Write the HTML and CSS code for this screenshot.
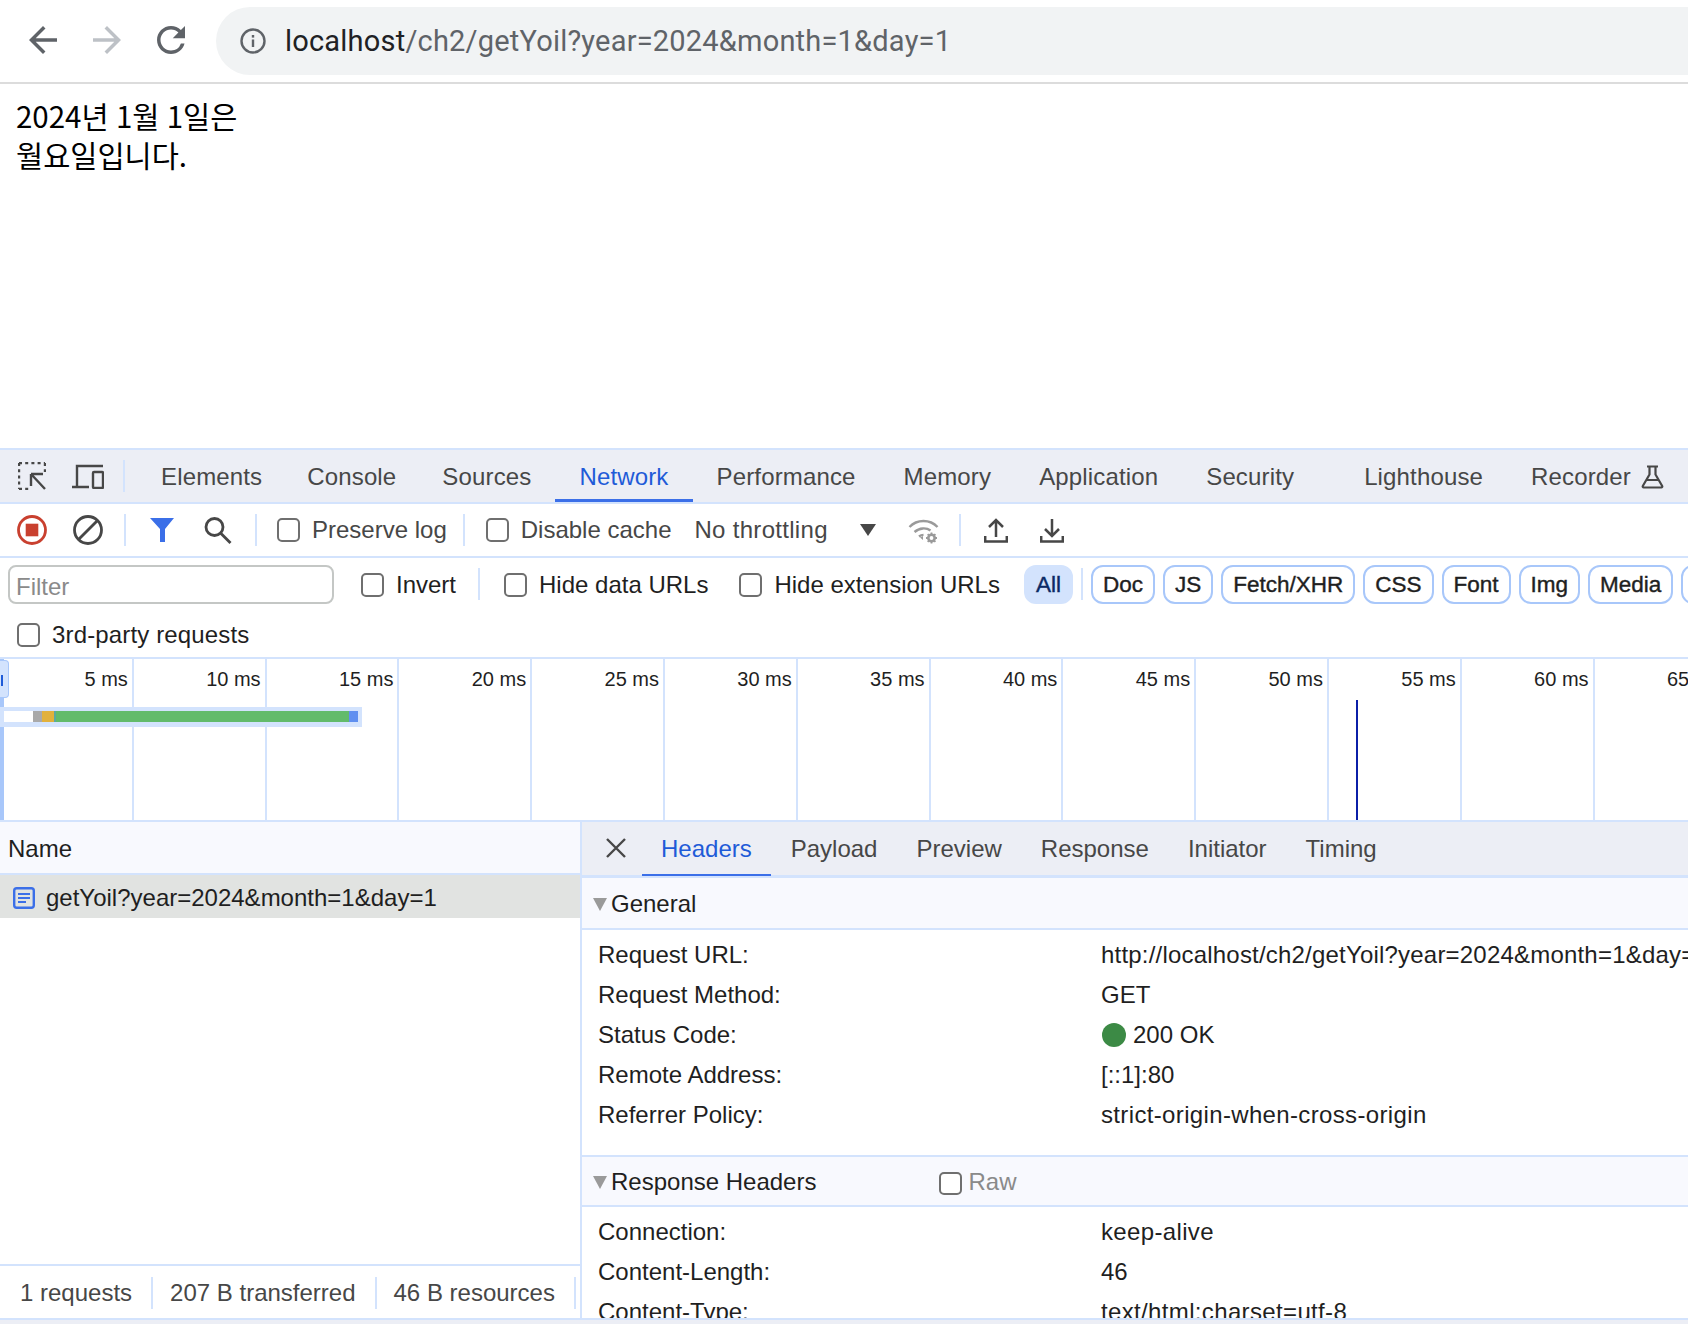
FILE: index.html
```html
<!DOCTYPE html>
<html lang="ko">
<head>
    <meta charset="UTF-8">
    <title>localhost/ch2/getYoil</title>
    <link rel="stylesheet" href="styles.css">
</head>
<body>

    <!-- Browser toolbar -->
    <div class="browser-bar">
        <svg class="nav-icon" viewBox="0 0 24 24"><path fill="#5f6368" d="M20 11H7.83l5.59-5.59L12 4l-8 8 8 8 1.41-1.41L7.83 13H20v-2z"/></svg>
        <svg class="nav-icon" viewBox="0 0 24 24"><path fill="#bdc1c6" d="M4 11h12.17l-5.59-5.59L12 4l8 8-8 8-1.41-1.41L16.17 13H4v-2z"/></svg>
        <svg class="nav-icon" viewBox="0 0 24 24"><path fill="#5f6368" d="M17.65 6.35A7.958 7.958 0 0 0 12 4c-4.42 0-7.99 3.58-7.99 8s3.57 8 7.99 8c3.73 0 6.84-2.55 7.73-6h-2.08A5.99 5.99 0 0 1 12 18c-3.31 0-6-2.69-6-6s2.69-6 6-6c1.66 0 3.14.69 4.22 1.78L13 11h7V4l-2.35 2.35z"/></svg>
        <div class="address">
            <svg class="info-icon" viewBox="0 0 28 28"><circle cx="14" cy="14" r="11.5" fill="none" stroke="#5f6368" stroke-width="2.4"/><rect x="12.8" y="12.5" width="2.4" height="7.5" fill="#5f6368"/><rect x="12.8" y="8" width="2.4" height="2.6" fill="#5f6368"/></svg>
            <span class="host">localhost</span><span class="path">/ch2/getYoil?year=2024&amp;month=1&amp;day=1</span>
        </div>
    </div>

    <!-- Page content -->
    <div class="page">2024년 1월 1일은<br>월요일입니다.</div>

    <!-- DevTools -->
    <div class="devtools">
        <div class="main-tabs">
            <svg class="select-icon" viewBox="0 0 28 28" fill="none" stroke="#474747" stroke-width="2.4">
                <path d="M1 1h26M1 1v26M1 27h10M27 1v9" stroke-dasharray="3 3.2"/>
                <path d="M13 12h12M13 12v12M13 12l14 15"/>
            </svg>
            <svg class="device-icon" viewBox="0 0 32 25" fill="none" stroke="#474747" stroke-width="2.4">
                <path d="M5 22V2h26M0 23h17"/>
                <rect x="21" y="8" width="10" height="16" rx="1"/>
            </svg>
            <span class="divider tabs-divider"></span>
            <span class="tab">Elements</span>
            <span class="tab console-tab">Console</span>
            <span class="tab">Sources</span>
            <span class="tab active">Network</span>
            <span class="tab">Performance</span>
            <span class="tab">Memory</span>
            <span class="tab">Application</span>
            <span class="tab security-tab">Security</span>
            <span class="tab">Lighthouse</span>
            <span class="tab recorder-tab">Recorder
                <svg class="flask-icon" viewBox="0 0 23 24" fill="none" stroke="#474747" stroke-width="2.2"><path d="M6 1.5h11M8.5 1.5v8L1.8 21a1 1 0 0 0 .9 1.5h17.6a1 1 0 0 0 .9-1.5L14.500 9.500v-8M5.500 15h12"/></svg>
            </span>
        </div>

        <div class="net-toolbar">
            <span class="icon-btn"><svg viewBox="0 0 30 30" width="30" height="30"><circle cx="15" cy="15" r="13.500" fill="none" stroke="#c9402f" stroke-width="2.800"/><rect x="8.700" y="8.700" width="12.600" height="12.600" fill="#c9402f"/></svg></span>
            <span class="icon-btn"><svg viewBox="0 0 30 30" width="30" height="30" fill="none" stroke="#474747" stroke-width="2.800"><circle cx="15" cy="15" r="13.500"/><path d="M5.500 24.500l19-19"/></svg></span>
            <span class="divider record-divider"></span>
            <span class="icon-btn"><svg viewBox="0 0 24 24" width="24" height="24"><path fill="#3b6fe8" d="M0 0h24l-9 11v13h-5V11z"/></svg></span>
            <span class="icon-btn"><svg viewBox="0 0 28 27" width="28" height="27" fill="none" stroke="#474747" stroke-width="2.800"><circle cx="10.500" cy="10" r="8.500"/><path d="M16.500 16l10 10"/></svg></span>
            <span class="divider"></span>
            <label class="check preserve"><input type="checkbox">Preserve log</label>
            <span class="divider"></span>
            <label class="check cache"><input type="checkbox">Disable cache</label>
            <span class="throttle">No throttling</span>
            <svg class="caret" viewBox="0 0 16 12"><path fill="#474747" d="M0 0h16L8 12z"/></svg>
            <svg class="wifi-icon" viewBox="0 0 31 27" fill="none" stroke="#9a9a9a" stroke-width="2.400">
                <path d="M1.500 10C9 2 22 2 29.500 10M6.500 15c5-4.500 12-4.500 16 -1.500M11 19.500c1.500-1.200 3-1.600 4.500-1.600"/>
                <path fill="#9a9a9a" stroke="none" d="M15 23l-3-2.500 3-1.500z"/>
                <circle cx="23.500" cy="21" r="3.200" stroke-width="2.600"/>
                <path stroke-width="1.800" d="M23.500 15.500v2M23.500 24.500v2M18 21h2M27 21h2M19.700 17.200l1.400 1.400M26 23.500l1.400 1.400M19.700 24.800l1.400-1.400M26 18.500l1.400-1.400"/>
            </svg>
            <span class="divider"></span>
            <svg class="transfer-icon upload" viewBox="0 0 24 25" fill="none" stroke="#474747" stroke-width="2.500"><path d="M12 19V2M5 9l7-7 7 7M1.200 18v5.500h21.600V18"/></svg>
            <svg class="transfer-icon download" viewBox="0 0 24 25" fill="none" stroke="#474747" stroke-width="2.500"><path d="M12 1v17M5 11l7 7 7-7M1.200 18v5.500h21.600V18"/></svg>
        </div>

        <div class="filter-bar">
            <div class="filter-row">
                <div class="filter-input">Filter</div>
                <label class="check invert"><input type="checkbox">Invert</label>
                <span class="divider"></span>
                <label class="check hide-data"><input type="checkbox">Hide data URLs</label>
                <label class="check hide-ext"><input type="checkbox">Hide extension URLs</label>
                <span class="pill selected">All</span>
                <span class="divider pill-divider"></span>
                <span class="pill">Doc</span>
                <span class="pill">JS</span>
                <span class="pill">Fetch/XHR</span>
                <span class="pill">CSS</span>
                <span class="pill">Font</span>
                <span class="pill">Img</span>
                <span class="pill">Media</span>
                <span class="pill">Manifest</span>
            </div>
            <label class="check third-party"><input type="checkbox">3rd-party requests</label>
        </div>

        <!-- Timeline overview -->
        <div class="overview">
            <div class="grid-cell"><span>5 ms</span></div>
            <div class="grid-cell"><span>10 ms</span></div>
            <div class="grid-cell"><span>15 ms</span></div>
            <div class="grid-cell"><span>20 ms</span></div>
            <div class="grid-cell"><span>25 ms</span></div>
            <div class="grid-cell"><span>30 ms</span></div>
            <div class="grid-cell"><span>35 ms</span></div>
            <div class="grid-cell"><span>40 ms</span></div>
            <div class="grid-cell"><span>45 ms</span></div>
            <div class="grid-cell"><span>50 ms</span></div>
            <div class="grid-cell"><span>55 ms</span></div>
            <div class="grid-cell"><span>60 ms</span></div>
            <div class="grid-cell"><span>65 ms</span></div>
            <div class="handle-line"></div>
            <div class="handle"></div>
            <div class="load-line"></div>
            <div class="request-strip">
                <span class="seg seg-white"></span>
                <span class="seg seg-grey"></span>
                <span class="seg seg-amber"></span>
                <span class="seg seg-green"></span>
                <span class="seg seg-blue"></span>
            </div>
        </div>

        <div class="split">
            <!-- Request list -->
            <div class="list-pane">
                <div class="list-header">Name</div>
                <div class="list-row">
                    <svg class="doc-icon" viewBox="0 0 22 22" fill="none" stroke="#3b6fe8"><rect x="1.200" y="1.200" width="19.600" height="19.600" rx="2.500" stroke-width="2.400"/><path stroke-width="2.200" d="M5 7h12M5 11h12M5 15h8"/></svg>
                    getYoil?year=2024&amp;month=1&amp;day=1
                </div>
                <div class="list-empty"></div>
                <div class="status-bar">
                    <span>1 requests</span>
                    <span>207 B transferred</span>
                    <span>46 B resources</span>
                </div>
            </div>

            <!-- Request details -->
            <div class="detail-pane">
                <div class="detail-tabs">
                    <svg class="close-icon" viewBox="0 0 20 20" fill="none" stroke="#474747" stroke-width="2.400"><path d="M1 1l18 18M19 1L1 19"/></svg>
                    <span class="detail-tab active">Headers</span>
                    <span class="detail-tab">Payload</span>
                    <span class="detail-tab">Preview</span>
                    <span class="detail-tab">Response</span>
                    <span class="detail-tab">Initiator</span>
                    <span class="detail-tab">Timing</span>
                </div>

                <div class="section-title"><span class="triangle"></span>General</div>
                <div class="rows">
                    <div class="row"><span class="key">Request URL:</span><span class="url">http://localhost/ch2/getYoil?year=2024&amp;month=1&amp;day=1</span></div>
                    <div class="row"><span class="key">Request Method:</span><span>GET</span></div>
                    <div class="row"><span class="key">Status Code:</span><span class="status"><span class="dot"></span>200 OK</span></div>
                    <div class="row"><span class="key">Remote Address:</span><span>[::1]:80</span></div>
                    <div class="row"><span class="key">Referrer Policy:</span><span class="value">strict-origin-when-cross-origin</span></div>
                </div>

                <div class="section-title response-title">
                    <span class="triangle"></span>Response Headers
                    <label class="raw"><input type="checkbox">Raw</label>
                </div>
                <div class="rows">
                    <div class="row"><span class="key">Connection:</span><span class="value">keep-alive</span></div>
                    <div class="row"><span class="key">Content-Length:</span><span>46</span></div>
                    <div class="row"><span class="key">Content-Type:</span><span class="value">text/html;charset=utf-8</span></div>
                </div>
            </div>
        </div>
        <div class="bottom-strip"></div>
    </div>

</body>
</html>
```

FILE: styles.css
```css
* {
    box-sizing: border-box;
}
body {
    margin: 0;
    width: 1688px;
    height: 1324px;
    overflow: hidden;
    background: white;
    font-family: "Liberation Sans", Arial, sans-serif;
    font-size: 24px;
    color: #1f1f1f;
}

/* browser chrome */
.browser-bar {
    height: 84px;
    display: flex;
    align-items: flex-start;
    border-bottom: 2px solid #dcdcdc;
    padding: 7px 0 0 22px;
    overflow: hidden;
}
.nav-icon {
    width: 42px;
    height: 42px;
    margin: 12px 22px 0 0;
    flex-shrink: 0;
}
.address {
    width: 1600px;
    height: 68px;
    margin-left: 2px;
    flex-shrink: 0;
    display: flex;
    align-items: center;
    background: #f1f3f4;
    border-radius: 34px;
    padding-left: 23px;
    font-family: Roboto, sans-serif;
    font-size: 29px;
    letter-spacing: 0.2px;
}
.info-icon {
    width: 28px;
    height: 28px;
    margin-right: 18px;
}
.host {
    color: #202124;
}
.path {
    color: #5f6368;
}

.page {
    height: 364px;
    padding: 12px 0 0 16px;
    font-family: "Noto Sans CJK KR", sans-serif;
    font-size: 29.5px;
    line-height: 39px;
    word-spacing: -1px;
    color: black;
}

/* devtools */
.devtools {
    height: 876px;
    display: flex;
    flex-direction: column;
    overflow: hidden;
}
.divider {
    width: 2px;
    height: 32px;
    margin: 0 9px;
    background: #d3e3fd;
    flex-shrink: 0;
}
.main-tabs {
    height: 56px;
    flex-shrink: 0;
    display: flex;
    align-items: stretch;
    background: #eceef5;
    border-top: 2px solid #d3e3fd;
    border-bottom: 2px solid #d3e3fd;
    color: #474747;
    letter-spacing: 0.15px;
}
.select-icon {
    width: 28px;
    height: 28px;
    margin: 12px 0 0 18px;
}
.device-icon {
    width: 32px;
    height: 25px;
    margin: 14px 0 0 26px;
}
.tabs-divider {
    margin: 10px 12px 0 19px;
}
.tab {
    display: flex;
    align-items: center;
    padding: 2px 24px 0;
    white-space: nowrap;
}
.tab.active {
    color: #1f5bd8;
    box-shadow: inset 0 -3px 0 #3b6fe8;
}
.tabs-divider + .tab {
    padding-right: 21px;
}
.console-tab {
    padding-right: 22px;
}
.security-tab {
    padding-right: 46px;
}
.recorder-tab {
    padding-right: 0;
}
.flask-icon {
    width: 23px;
    height: 24px;
    margin-left: 10px;
}

.net-toolbar {
    height: 54px;
    flex-shrink: 0;
    display: flex;
    align-items: center;
    padding-left: 4px;
    border-bottom: 2px solid #d3e3fd;
    color: #474747;
}
.icon-btn {
    width: 56px;
    display: flex;
    justify-content: center;
}
.record-divider {
    margin: 0 8px;
}
.check {
    display: flex;
    align-items: center;
    white-space: nowrap;
}
input[type="checkbox"] {
    appearance: none;
    width: 23px;
    height: 24px;
    margin: 0 12px 0 0;
    background: white;
    border: 2px solid #6f6f6f;
    border-radius: 5px;
}
.preserve {
    margin: 0 7px 0 11px;
}
.cache {
    margin-left: 12px;
}
.throttle {
    margin-left: 23px;
    letter-spacing: 0.3px;
}
.caret {
    width: 16px;
    height: 12px;
    margin-left: 32px;
}
.wifi-icon {
    width: 31px;
    height: 27px;
    margin: 0 11px 0 32px;
}
.transfer-icon {
    width: 24px;
    height: 25px;
}
.upload {
    margin-left: 14px;
}
.download {
    margin-left: 32px;
}

.filter-bar {
    height: 101px;
    flex-shrink: 0;
    border-bottom: 2px solid #d3e3fd;
}
.filter-row {
    height: 55px;
    display: flex;
    align-items: center;
    padding: 0 0 3px 8px;
    overflow: hidden;
}
.filter-row .check {
    padding-top: 2px;
}
.filter-input {
    width: 326px;
    height: 39px;
    flex-shrink: 0;
    border: 2px solid #c4c7c5;
    border-radius: 8px;
    padding: 5px 6px 0;
    color: #8a8a8a;
    line-height: 30px;
}
.invert {
    margin: 0 13px 0 27px;
}
.hide-data {
    margin-left: 15px;
}
.hide-ext {
    margin-left: 31px;
}
.pill {
    height: 39px;
    flex-shrink: 0;
    display: flex;
    align-items: center;
    padding: 2px 10px 0;
    margin-right: 8px;
    border: 2px solid #a8c7fa;
    border-radius: 12px;
    font-size: 22.5px;
    -webkit-text-stroke: 0.4px currentColor;
}
.pill.selected {
    margin: 0 0 0 24px;
    background: #d3e3fd;
    border-color: #d3e3fd;
    color: #0b2a66;
}
.pill-divider {
    margin: 0 8px;
}
.third-party {
    margin: 8px 0 0 17px;
    letter-spacing: 0.15px;
}

/* timeline overview */
.overview {
    height: 163px;
    flex-shrink: 0;
    position: relative;
    display: flex;
    padding-left: 1px;
    overflow: hidden;
    border-bottom: 2px solid #d3e3fd;
}
.grid-cell {
    width: 132.8px;
    flex-shrink: 0;
    border-right: 2px solid #d3e3fd;
    padding: 8px 4px 0 0;
    text-align: right;
    font-size: 20px;
    line-height: 24px;
    white-space: nowrap;
}
.grid-cell:last-of-type {
    border-right: none;
    text-align: left;
    padding-left: 75px;
}
.handle-line {
    position: absolute;
    left: 0;
    top: 0;
    bottom: 0;
    width: 4px;
    background: #a8c7fa;
}
.handle {
    position: absolute;
    left: 0;
    top: 1px;
    width: 9px;
    height: 38px;
    background: #d3e3fd;
    border: 1px solid #a8c7fa;
    border-left: none;
    border-radius: 0 4px 4px 0;
}
.handle::after {
    content: "";
    position: absolute;
    left: 1px;
    top: 14px;
    width: 2px;
    height: 11px;
    background: #1f5bd8;
}
.request-strip {
    position: absolute;
    left: 0;
    top: 48px;
    width: 362px;
    height: 20px;
    display: flex;
    padding: 4px 4px 5px 4px;
    background: #d3e3fd;
}
.seg {
    display: block;
    height: 11px;
}
.seg-white {
    width: 29px;
    background: white;
}
.seg-grey {
    width: 9px;
    background: #a9a9a9;
}
.seg-amber {
    width: 14px;
    background: #e2b13c;
    border-right: 2px solid #5aa9a0;
}
.seg-green {
    width: 293px;
    background: #62bb6b;
}
.seg-blue {
    width: 9px;
    background: #5f8ff0;
}
.load-line {
    position: absolute;
    left: 1356px;
    top: 41px;
    bottom: 0;
    width: 2px;
    background: #0b1fa8;
}

/* bottom split */
.split {
    flex: 1;
    min-height: 0;
    display: flex;
    overflow: hidden;
}
.list-pane {
    width: 582px;
    flex-shrink: 0;
    display: flex;
    flex-direction: column;
    border-right: 2px solid #d3e3fd;
}
.list-header {
    height: 53px;
    flex-shrink: 0;
    background: #f8f9fe;
    border-bottom: 2px solid #d3e3fd;
    padding: 13px 0 0 8px;
}
.list-row {
    height: 43px;
    flex-shrink: 0;
    display: flex;
    align-items: center;
    background: #e1e3e1;
    padding: 2px 0 0 13px;
}
.doc-icon {
    width: 22px;
    height: 22px;
    margin-right: 11px;
}
.list-empty {
    flex: 1;
}
.status-bar {
    height: 54px;
    flex-shrink: 0;
    display: flex;
    align-items: center;
    border-top: 2px solid #d3e3fd;
    color: #474747;
    padding: 2px 0 0 20px;
}
.status-bar span {
    padding-right: 19px;
    margin-right: 17px;
    line-height: 32px;
    border-right: 2px solid #d3e3fd;
    white-space: nowrap;
}
.detail-pane {
    flex: 1;
    min-width: 0;
    overflow: hidden;
}
.detail-tabs {
    height: 56px;
    display: flex;
    align-items: stretch;
    background: #eceef5;
    border-bottom: 3px solid #d3e3fd;
    color: #474747;
}
.close-icon {
    width: 20px;
    height: 20px;
    margin: 16px 35px 0 24px;
    flex-shrink: 0;
}
.detail-tab {
    display: flex;
    align-items: center;
    padding: 0 19.5px;
}
.detail-tab.active {
    margin-left: -19.5px;
    color: #1f5bd8;
    box-shadow: 0 1px 0 #3b6fe8, inset 0 -1px 0 #3b6fe8;
}
.section-title {
    height: 52px;
    display: flex;
    align-items: center;
    background: #f8f9fe;
    border-bottom: 2px solid #d3e3fd;
    padding: 2px 0 0 11px;
}
.triangle {
    width: 0;
    height: 0;
    margin-right: 4px;
    border-left: 7.5px solid transparent;
    border-right: 7.5px solid transparent;
    border-top: 13px solid #9a9a9a;
}
.response-title {
    border-top: 2px solid #d3e3fd;
}
.rows {
    padding: 5px 0 0 16px;
}
.rows + .section-title {
    margin-top: 20px;
}
.row {
    height: 40px;
    display: flex;
    align-items: center;
    white-space: nowrap;
}
.key {
    width: 503px;
    flex-shrink: 0;
}
.value {
    letter-spacing: 0.35px;
}
.url {
    letter-spacing: 0.2px;
}
.status {
    display: flex;
    align-items: center;
}
.dot {
    width: 24px;
    height: 24px;
    margin: 0 7px 0 1px;
    border-radius: 50%;
    background: #3c8a45;
}
.raw {
    display: flex;
    align-items: center;
    margin-left: 123px;
    color: #8a8a8a;
}
.raw input {
    margin: 3px 6px 0 0;
    height: 23px;
}
.bottom-strip {
    height: 6px;
    flex-shrink: 0;
    background: #eceef5;
    border-top: 2px solid #d3e3fd;
}
```
